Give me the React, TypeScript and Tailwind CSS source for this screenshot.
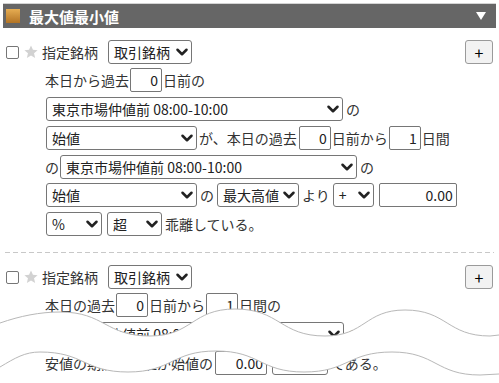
import { ChevronDown } from 'lucide-react';

const Sel = ({ label, className }: { label: string; className: string }) => (
  <div
    className={`flex h-[24px] shrink-0 items-center justify-between rounded-[3px] border border-[#767676] bg-white pl-[5px] text-[14px] text-[#222] ${className}`}
  >
    <span className="leading-none">{label}</span>
    <ChevronDown className="h-[18px] w-[18px] shrink-0" strokeWidth={3.4} />
  </div>
);

const Num = ({ value, className }: { value: string; className: string }) => (
  <div
    className={`flex h-[24px] shrink-0 items-center justify-end rounded-[2px] border border-[#767676] bg-white pr-[3px] text-[14px] text-[#222] ${className}`}
  >
    {value}
  </div>
);

const StarIcon = () => (
  <svg viewBox="0 0 24 24" className="h-[14px] w-[14px]">
    <path
      d="M12 0.8l3.3 7.4 8 .7-6.1 5.3 1.9 7.9L12 17.9l-7.1 4.2 1.9-7.9L.7 8.9l8-.7z"
      fill="#d2d2d2"
    />
  </svg>
);

const PlusButton = () => (
  <div className="ml-auto mr-[6px] flex h-[24px] w-[28px] items-center justify-center rounded-[3px] border border-[#9a9a9a] bg-[#f2f2f2] text-[16px] text-black">
    +
  </div>
);

function HeadRow() {
  return (
    <div className="flex h-[24px] items-center">
      <div className="ml-[6px] h-[13px] w-[13px] rounded-[2px] border border-[#767676] bg-white" />
      <div className="ml-[5px]">
        <StarIcon />
      </div>
      <span className="ml-[4px]">指定銘柄</span>
      <Sel label="取引銘柄" className="ml-[10px] w-[84px]" />
      <PlusButton />
    </div>
  );
}

// torn-edge cut drawn over the lower part of the panel
const TOP_EDGE =
  'M0 323 C20 316 40 312 60 312 C105 312 105 336 150 336 C192 336 192 309 235 309 C280 309 280 336 325 336 C365 336 365 310 405 310 C447 310 447 336 490 336 L499 335';
const BOTTOM_EDGE =
  'M0 367 C15 358 25 352 40 352 C84 352 84 372 128 372 C172 372 172 351 216 351 C260 351 260 372 304 372 C348 372 348 352 392 352 C436 352 436 375 480 375 L499 374';
const BAND =
  TOP_EDGE +
  ' L499 374 L480 375 C436 375 436 352 392 352 C348 352 348 372 304 372 C260 372 260 351 216 351 C172 351 172 372 128 372 C84 372 84 352 40 352 C25 352 15 358 0 367 Z';

export default function App() {
  return (
    <div className="relative h-[383px] w-[499px] overflow-hidden bg-white font-['Noto_Sans_CJK_JP',sans-serif] text-[14px] text-[#333]">
      <div className="mx-[3px] mt-[3px] flex h-[25px] items-center border-t border-[#d4d4d4] bg-[#666]">
        <div className="ml-[3px] h-[14px] w-[14px] bg-gradient-to-b from-[#e6ad52] to-[#b37424]" />
        <span className="ml-[9px] text-[15px] font-bold leading-none text-white">最大値最小値</span>
        <svg viewBox="0 0 10 8" className="ml-auto mr-[10px] h-[8px] w-[10px]">
          <path d="M0 0h10L5 8z" fill="#fff" />
        </svg>
      </div>

      <div className="mt-[12px] flex flex-col">
        <HeadRow />

        <div className="ml-[45px] mt-[4px] flex h-[24px] items-center">
          <span>本日から過去</span>
          <Num value="0" className="ml-[1px] w-[32px]" />
          <span className="ml-[1px]">日前の</span>
        </div>

        <div className="ml-[46px] mt-[5px] flex h-[24px] items-center">
          <Sel label="東京市場仲値前 08:00-10:00" className="w-[297px]" />
          <span className="ml-[3px]">の</span>
        </div>

        <div className="ml-[46px] mt-[5px] flex h-[24px] items-center">
          <Sel label="始値" className="w-[151px]" />
          <span className="ml-[2px]">が、本日の過去</span>
          <Num value="0" className="ml-[2px] w-[32px]" />
          <span className="ml-[1px]">日前から</span>
          <Num value="1" className="ml-[1px] w-[32px]" />
          <span className="ml-[1px]">日間</span>
        </div>

        <div className="ml-[45px] mt-[5px] flex h-[24px] items-center">
          <span>の</span>
          <Sel label="東京市場仲値前 08:00-10:00" className="ml-[1px] w-[297px]" />
          <span className="ml-[3px]">の</span>
        </div>

        <div className="ml-[46px] mt-[4px] flex h-[24px] items-center">
          <Sel label="始値" className="w-[151px]" />
          <span className="ml-[3px]">の</span>
          <Sel label="最大高値" className="ml-[3px] w-[82px]" />
          <span className="ml-[3px]">より</span>
          <Sel label="+" className="ml-[3px] w-[41px]" />
          <Num value="0.00" className="ml-[5px] w-[78px]" />
        </div>

        <div className="ml-[46px] mt-[5px] flex h-[24px] items-center">
          <Sel label="%" className="w-[56px]" />
          <Sel label="超" className="ml-[5px] w-[55px]" />
          <span className="ml-[3px]">乖離している。</span>
        </div>

        <div className="mx-[5px] mt-[16px] h-px bg-[repeating-linear-gradient(to_right,#c8c8c8_0_5px,transparent_5px_8px)]" />

        <div className="mt-[12px]">
          <HeadRow />
        </div>

        <div className="ml-[45px] mt-[4px] flex h-[24px] items-center">
          <span>本日の過去</span>
          <Num value="0" className="ml-[1px] w-[32px]" />
          <span className="ml-[1px]">日前から</span>
          <Num value="1" className="ml-[1px] w-[32px]" />
          <span className="ml-[1px]">日間の</span>
        </div>

        <div className="ml-[46px] mt-[5px] flex h-[24px] items-center">
          <Sel label="東京市場仲値前 08:00-10:00" className="w-[298px]" />
          <span className="ml-[3px]">の</span>
        </div>

        <div className="ml-[45px] mt-[5px] flex h-[24px] items-center">
          <span>安値の期間最小値が始値の</span>
          <Num value="0.00" className="ml-[2px] w-[52px]" />
          <Sel label="%" className="ml-[5px] w-[56px]" />
          <span className="ml-[3px]">である。</span>
        </div>
      </div>

      <svg
        className="pointer-events-none absolute left-0 top-0 h-[383px] w-[499px]"
        viewBox="0 0 499 383"
      >
        <path d={BAND} fill="#fff" />
        <path d={TOP_EDGE} fill="none" stroke="#b8b8b8" strokeWidth="1" />
        <path d={BOTTOM_EDGE} fill="none" stroke="#b8b8b8" strokeWidth="1" />
      </svg>
    </div>
  );
}
